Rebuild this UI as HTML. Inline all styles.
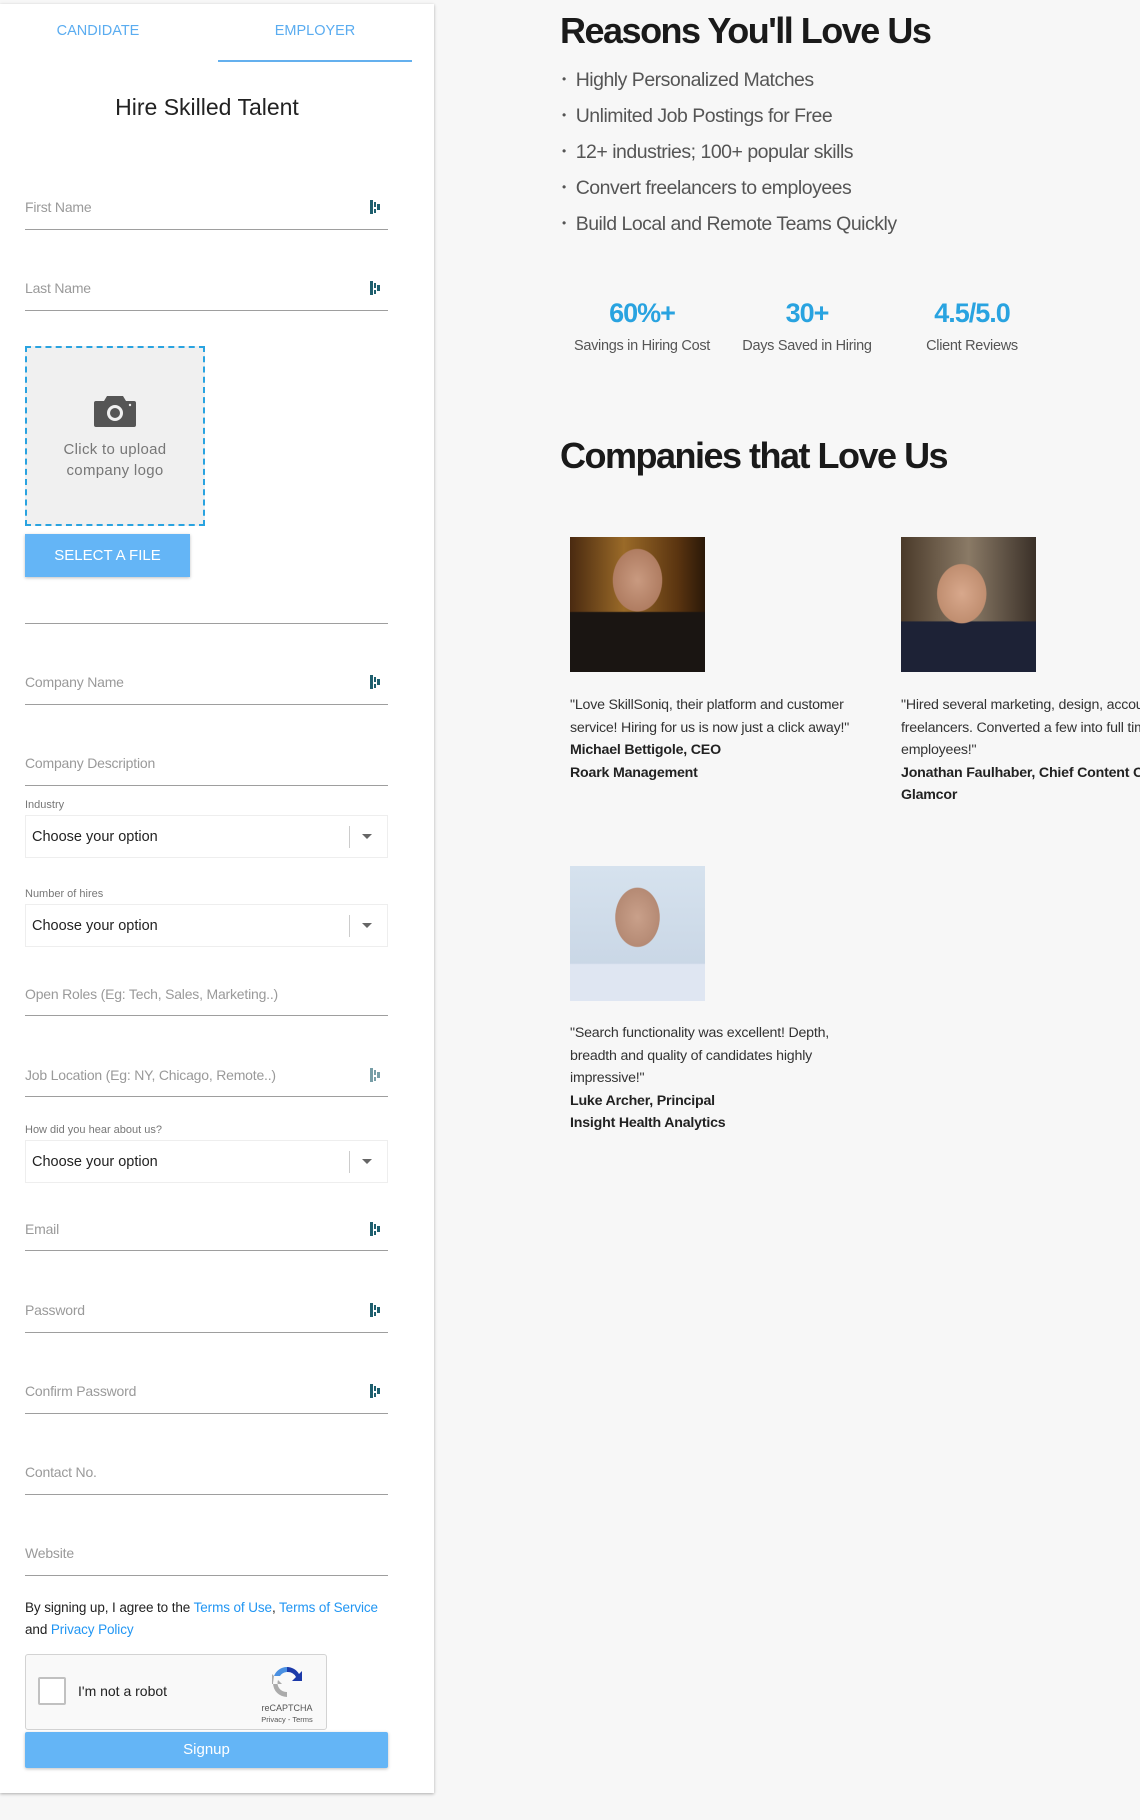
<!DOCTYPE html>
<html><head><meta charset="utf-8">
<style>
*{margin:0;padding:0;box-sizing:border-box}
body{width:1140px;height:1820px;background:#f7f7f7;font-family:"Liberation Sans",sans-serif;position:relative;overflow:hidden}
.a{position:absolute}
.card{position:absolute;left:0;top:4px;width:434px;height:1789px;background:#fff;box-shadow:0 1px 3px rgba(0,0,0,.3)}
.lbl{position:absolute;left:25px;font-size:14px;color:#9a9a9a;letter-spacing:-.2px}
.ul{position:absolute;left:25px;width:363px;height:1px;background:#9e9e9e}
.ic{position:absolute;left:370px;width:11px;height:14px}
.ic i{position:absolute;background:#1e5f6e}
.small{position:absolute;left:25px;font-size:11px;color:#777}
.sel{position:absolute;left:25px;width:363px;height:43px;border:1px solid #eee;background:#fff}
.sel span{position:absolute;left:6px;top:13px;font-size:14.5px;color:#222}
.sel b{position:absolute;left:323px;top:10px;width:1px;height:22px;background:#ccc}
.sel em{position:absolute;left:336px;top:18px;border-left:5px solid transparent;border-right:5px solid transparent;border-top:5px solid #666}
.bul{position:absolute;left:562px;font-size:19.5px;color:#555;letter-spacing:-.5px}
.bul:before{content:"•";font-size:12px;position:relative;top:-3px;margin-right:10px}
.num{position:absolute;width:180px;text-align:center;font-size:27px;font-weight:bold;color:#29a3e0;letter-spacing:-1px}
.sl{position:absolute;width:180px;text-align:center;font-size:14.5px;color:#555;letter-spacing:-.3px}
.q{position:absolute;font-size:14.2px;line-height:22.6px;color:#333;letter-spacing:-.2px;white-space:nowrap}
.q b{color:#222}
h2{position:absolute;left:560px;font-size:36px;font-weight:bold;color:#1a1a1a;letter-spacing:-1.5px;white-space:nowrap}
</style></head><body>
<div class="card">
<div class="a" style="left:0;top:19px;width:196px;text-align:center;font-size:14.5px;color:#5aacf0">CANDIDATE</div>
<div class="a" style="left:218px;top:19px;width:194px;text-align:center;font-size:14.5px;color:#5aacf0">EMPLOYER</div>
<div class="a" style="left:218px;top:56px;width:194px;height:2px;background:#64b0ee"></div>
<div class="a" style="left:0;top:90px;width:414px;text-align:center;font-size:23px;color:#222">Hire Skilled Talent</div>
</div>

<div class="lbl" style="top:199px">First Name</div><div class="ul" style="top:229px"></div>
<div class="ic" style="top:200px"><i style="left:0;top:0;width:3px;height:14px"></i><i style="left:4px;top:2px;width:2px;height:5px"></i><i style="left:4px;top:9px;width:2px;height:4px"></i><i style="left:7px;top:4px;width:3px;height:6px"></i></div>
<div class="lbl" style="top:280px">Last Name</div><div class="ul" style="top:310px"></div>
<div class="ic" style="top:281px"><i style="left:0;top:0;width:3px;height:14px"></i><i style="left:4px;top:2px;width:2px;height:5px"></i><i style="left:4px;top:9px;width:2px;height:4px"></i><i style="left:7px;top:4px;width:3px;height:6px"></i></div>

<div class="a" style="left:25px;top:346px;width:180px;height:180px;background:#f0f0f0;border:2px dashed #29a3e0"></div>
<svg class="a" style="left:93px;top:393px" width="44" height="36" viewBox="0 0 44 36"><path d="M14 3h16l3 5h8a2 2 0 0 1 2 2v22a2 2 0 0 1-2 2H3a2 2 0 0 1-2-2V10a2 2 0 0 1 2-2h8z" fill="#555"/><circle cx="22" cy="20" r="8" fill="#f0f0f0"/><circle cx="22" cy="20" r="5" fill="#555"/><circle cx="37" cy="12" r="1.2" fill="#f0f0f0"/></svg>
<div class="a" style="left:25px;top:439px;width:180px;text-align:center;font-size:15px;line-height:21px;color:#777;letter-spacing:.3px">Click to upload<br>company logo</div>
<div class="a" style="left:25px;top:534px;width:165px;height:43px;background:#64b5f6;box-shadow:0 1px 3px rgba(0,0,0,.25);color:#fff;font-size:15px;text-align:center;line-height:43px">SELECT A FILE</div>
<div class="ul" style="top:623px"></div>

<div class="lbl" style="top:674px">Company Name</div><div class="ul" style="top:704px"></div>
<div class="ic" style="top:675px"><i style="left:0;top:0;width:3px;height:14px"></i><i style="left:4px;top:2px;width:2px;height:5px"></i><i style="left:4px;top:9px;width:2px;height:4px"></i><i style="left:7px;top:4px;width:3px;height:6px"></i></div>
<div class="lbl" style="top:755px">Company Description</div><div class="ul" style="top:785px"></div>
<div class="small" style="top:799px">Industry</div>
<div class="sel" style="top:815px"><span>Choose your option</span><b></b><em></em></div>
<div class="small" style="top:888px">Number of hires</div>
<div class="sel" style="top:904px"><span>Choose your option</span><b></b><em></em></div>
<div class="lbl" style="top:986px">Open Roles (Eg: Tech, Sales, Marketing..)</div><div class="ul" style="top:1015px"></div>
<div class="lbl" style="top:1067px">Job Location (Eg: NY, Chicago, Remote..)</div><div class="ul" style="top:1096px"></div>
<div class="ic" style="top:1068px;opacity:.6"><i style="left:0;top:0;width:3px;height:14px"></i><i style="left:4px;top:2px;width:2px;height:5px"></i><i style="left:4px;top:9px;width:2px;height:4px"></i><i style="left:7px;top:4px;width:3px;height:6px"></i></div>
<div class="small" style="top:1124px">How did you hear about us?</div>
<div class="sel" style="top:1140px"><span>Choose your option</span><b></b><em></em></div>
<div class="lbl" style="top:1221px">Email</div><div class="ul" style="top:1250px"></div>
<div class="ic" style="top:1222px"><i style="left:0;top:0;width:3px;height:14px"></i><i style="left:4px;top:2px;width:2px;height:5px"></i><i style="left:4px;top:9px;width:2px;height:4px"></i><i style="left:7px;top:4px;width:3px;height:6px"></i></div>
<div class="lbl" style="top:1302px">Password</div><div class="ul" style="top:1332px"></div>
<div class="ic" style="top:1303px"><i style="left:0;top:0;width:3px;height:14px"></i><i style="left:4px;top:2px;width:2px;height:5px"></i><i style="left:4px;top:9px;width:2px;height:4px"></i><i style="left:7px;top:4px;width:3px;height:6px"></i></div>
<div class="lbl" style="top:1383px">Confirm Password</div><div class="ul" style="top:1413px"></div>
<div class="ic" style="top:1384px"><i style="left:0;top:0;width:3px;height:14px"></i><i style="left:4px;top:2px;width:2px;height:5px"></i><i style="left:4px;top:9px;width:2px;height:4px"></i><i style="left:7px;top:4px;width:3px;height:6px"></i></div>
<div class="lbl" style="top:1464px">Contact No.</div><div class="ul" style="top:1494px"></div>
<div class="lbl" style="top:1545px">Website</div><div class="ul" style="top:1575px"></div>

<div class="a" style="left:25px;top:1597px;font-size:13.5px;line-height:22px;color:#222;letter-spacing:-.1px">By signing up, I agree to the <span style="color:#2196f3">Terms of Use</span>, <span style="color:#2196f3">Terms of Service</span><br>and <span style="color:#2196f3">Privacy Policy</span></div>

<div class="a" style="left:25px;top:1654px;width:302px;height:76px;background:#f9f9f9;border:1px solid #d3d3d3;border-radius:3px"></div>
<div class="a" style="left:38px;top:1677px;width:28px;height:28px;background:#fff;border:2px solid #c1c1c1;border-radius:2px"></div>
<div class="a" style="left:78px;top:1683px;font-size:14px;color:#222">I'm not a robot</div>
<svg class="a" style="left:271px;top:1665px" width="32" height="32" viewBox="0 0 32 32"><path d="M16 2a14 14 0 0 1 12 7l3-3v10H21l4-4a9 9 0 0 0-9-5z" fill="#1c3aa9"/><path d="M16 2A14 14 0 0 0 3 11h6a9 9 0 0 1 7-4z" fill="#4a90e2"/><path d="M3 11l-2-2v10h10l-4-4a9 9 0 0 0 9 12v5A14 14 0 0 1 2 18z" fill="#ababab"/></svg>
<div class="a" style="left:256px;top:1703px;width:62px;text-align:center;font-size:9px;color:#555">reCAPTCHA</div>
<div class="a" style="left:256px;top:1715px;width:62px;text-align:center;font-size:7.5px;color:#555">Privacy - Terms</div>
<div class="a" style="left:25px;top:1732px;width:363px;height:36px;background:#64b5f6;border-radius:2px;box-shadow:0 1px 3px rgba(0,0,0,.25);color:#fff;font-size:15px;text-align:center;line-height:36px">Signup</div>

<h2 style="top:10px">Reasons You'll Love Us</h2>
<div class="bul" style="top:69px">Highly Personalized Matches</div>
<div class="bul" style="top:105px">Unlimited Job Postings for Free</div>
<div class="bul" style="top:141px">12+ industries; 100+ popular skills</div>
<div class="bul" style="top:177px">Convert freelancers to employees</div>
<div class="bul" style="top:213px">Build Local and Remote Teams Quickly</div>

<div class="num" style="left:552px;top:298px">60%+</div>
<div class="num" style="left:717px;top:298px">30+</div>
<div class="num" style="left:882px;top:298px">4.5/5.0</div>
<div class="sl" style="left:552px;top:338px">Savings in Hiring Cost</div>
<div class="sl" style="left:717px;top:338px">Days Saved in Hiring</div>
<div class="sl" style="left:882px;top:338px">Client Reviews</div>

<h2 style="top:435px">Companies that Love Us</h2>

<div class="a" style="left:570px;top:537px;width:135px;height:135px;background:radial-gradient(ellipse 30% 38% at 50% 32%,#c99a80 0,#b07d62 60%,transparent 62%),linear-gradient(180deg,transparent 55%,#1a1512 56%),linear-gradient(90deg,#4a2a10,#9a6a28 40%,#5a3410 80%,#2a1808)"></div>
<div class="a" style="left:901px;top:537px;width:135px;height:135px;background:radial-gradient(ellipse 30% 36% at 45% 42%,#d8a88c 0,#c08e70 60%,transparent 62%),linear-gradient(180deg,transparent 62%,#1d2236 63%),linear-gradient(90deg,#4a3a2a,#8a7a66 50%,#3a3028)"></div>
<div class="a" style="left:570px;top:866px;width:135px;height:135px;background:radial-gradient(ellipse 27% 36% at 50% 38%,#c9a08a 0,#b58a74 60%,transparent 62%),linear-gradient(180deg,transparent 72%,#dfe6f2 73%),linear-gradient(180deg,#d6e2ee,#c5d3e3)"></div>

<div class="q" style="left:570px;top:694px">"Love SkillSoniq, their platform and customer<br>service! Hiring for us is now just a click away!"<br><b>Michael Bettigole, CEO<br>Roark Management</b></div>
<div class="q" style="left:901px;top:694px">"Hired several marketing, design, accounting<br>freelancers. Converted a few into full time<br>employees!"<br><b>Jonathan Faulhaber, Chief Content Officer<br>Glamcor</b></div>
<div class="q" style="left:570px;top:1022px">"Search functionality was excellent! Depth,<br>breadth and quality of candidates highly<br>impressive!"<br><b>Luke Archer, Principal<br>Insight Health Analytics</b></div>
</body></html>
